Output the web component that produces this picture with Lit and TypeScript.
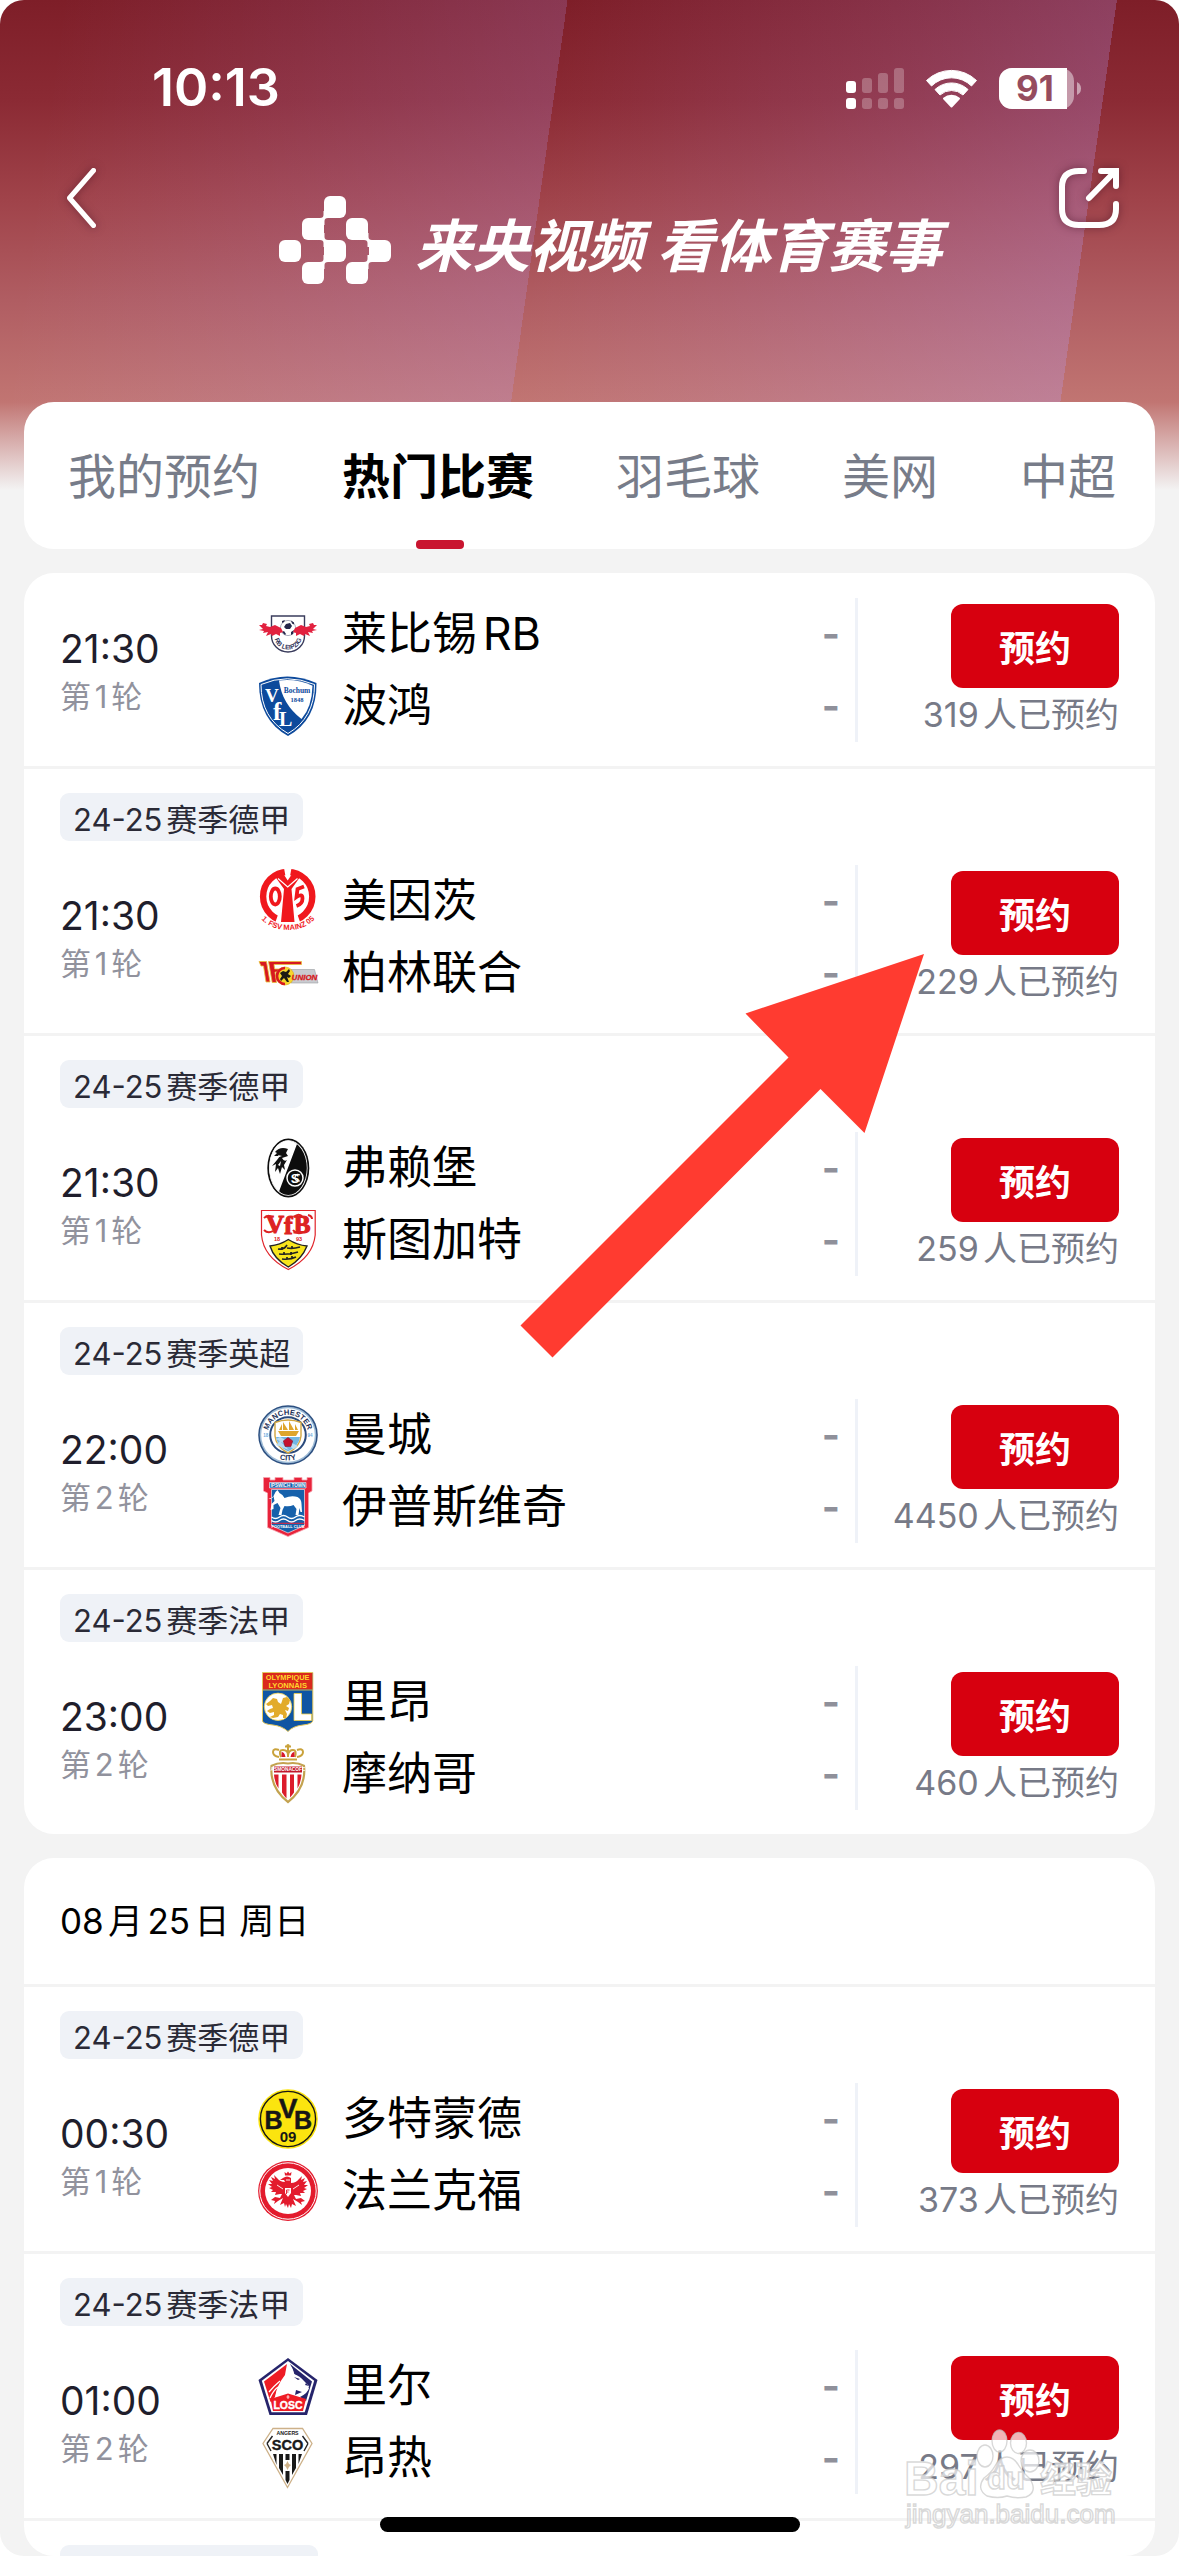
import { LitElement, html, svg, css, nothing, TemplateResult } from "lit";
import { customElement, property, state } from "lit/decorators.js";
import { classMap } from "lit/directives/class-map.js";

interface Team {
  name: string;
  crest: string;
}

interface Match {
  league?: string;
  time: string;
  round: string;
  home: Team;
  away: Team;
  booked: number;
}

const SANS = "Liberation Sans, Arial, sans-serif";
const SERIF = "Liberation Serif, serif";

const CRESTS: Record<string, TemplateResult> = {
  leipzig: html`<svg viewBox="0 0 60 60" aria-hidden="true">
    <path d="M13.500 12H46.500V32A16.500 16 0 0 1 13.500 32Z" fill="#fff" stroke="#3a3c5c" stroke-width="1.400" />
    <circle cx="30" cy="24" r="7.600" fill="#fff" stroke="#8a8ca4" stroke-width=".7" />
    <path d="M28 20l4-1 2 3-2 3-4 0-2-2zM24 17l3-1-1 2-2 1zM33 16.600l3 2 0 2-2-1zM24 28l2-1 2 3-1 1zM33 28l3-2-1 4-2 1z" fill="#24264a" />
    <path d="M1 21l3 0 1-2 4 1-1 2 4 1 5-2 6 3 2 4-3 1 0 3-4-2-4 2-1-2-5 2 2-4-5 1 1-2-5-1 4-1z" fill="#e2213f" />
    <path d="M59 21l-3 0-1-2-4 1 1 2-4 1-5-2-6 3-2 4 3 1 0 3 4-2 4 2 1-2 5 2-2-4 5 1-1-2 5-1-4-1z" fill="#e2213f" />
    <path id="lp-arc" d="M16.500 33A13.500 12.500 0 0 0 43.500 33" fill="none" />
    <text font-family=${SANS} font-size="6.500" font-weight="700" fill="#34365a">
      <textPath href="#lp-arc" startOffset="50%" text-anchor="middle">RB LEIPZIG</textPath>
    </text>
  </svg>`,
  bochum: html`<svg viewBox="0 0 60 60" aria-hidden="true">
    <path d="M1 7Q29 -6 58.500 7Q59 44 30 60Q1 44 1 7Z" fill="#0d4a9c" />
    <path d="M3 8.500Q29 -3 56.500 8.500Q56.500 42 30 57.500Q3 42 3 8.500Z" fill="none" stroke="#fff" stroke-width="1" />
    <path d="M21 4.500Q40 2.500 54.500 9.800Q54 31 43.500 43Q24 28 21 4.500Z" fill="#fff" />
    <g font-family=${SERIF} font-weight="700">
      <text x="7" y="26" font-size="19" fill="#fff">V</text>
      <text x="15" y="44" font-size="25" fill="#fff">f</text>
      <text x="21" y="50" font-size="20" fill="#fff">L</text>
      <text x="39" y="17" font-size="7.500" text-anchor="middle" fill="#0d4a9c">Bochum</text>
      <text x="39" y="25.500" font-size="6.500" text-anchor="middle" fill="#0d4a9c">1848</text>
    </g>
  </svg>`,
  mainz: html`<svg viewBox="0 0 60 60" aria-hidden="true">
    <circle cx="29.700" cy="25.500" r="24.600" fill="none" stroke="#f0181d" stroke-width="6.400" />
    <path d="M26 -3H33.500L31.500 8H28ZM15 58L22 38H37.500L44.500 58Z" fill="#fff" />
    <path d="M16 4L24.500 1.500L29.700 9.500L35 1.500L43.500 4L33.500 18L36.500 51H23L26 18Z" fill="#f0181d" />
    <path d="M20 7.500L29.700 16L39.500 7.500" fill="none" stroke="#fff" stroke-width="1.200" />
    <ellipse cx="17.300" cy="25.500" rx="4.500" ry="8" fill="none" stroke="#f0181d" stroke-width="3.800" />
    <path d="M46 15.500L39.500 18L38.500 26Q44.500 22 44.500 27.500Q44.500 33 38.500 35" fill="none" stroke="#f0181d" stroke-width="3.800" />
    <path id="mz-arc" d="M-1 43Q10 59 30 59Q50 59 61 43" fill="none" />
    <text font-family=${SANS} font-size="7.500" font-weight="700" fill="#f0181d">
      <textPath href="#mz-arc" startOffset="50%" text-anchor="middle">1. FSV MAINZ 05</textPath>
    </text>
  </svg>`,
  union: html`<svg viewBox="0 0 60 60" aria-hidden="true">
    <path d="M33 26.500H56.500L60 40H33Z" fill="#c9cbd0" stroke="#9b9da3" stroke-width=".6" />
    <path d="M1 18.500L8.500 18.500L12 39H8L5.500 23H3Z" fill="#d71920" stroke="#e9c23a" stroke-width=".8" />
    <path d="M10.500 18.500H43.500V21.500H16L16.600 26H22V29H17L18.500 39.500H14.200Z" fill="#d71920" stroke="#e9c23a" stroke-width=".8" />
    <circle cx="27" cy="33" r="9" fill="#f6d62b" stroke="#d9a91a" stroke-width=".6" />
    <path d="M27 25A8 8 0 1 0 27 41" fill="none" stroke="#d71920" stroke-width="2.600" />
    <path d="M22 30l3-2 3 1 3-3 1 2-2 3 3 2-2 2-2-1 2 5-2 0-3-4-3 3-1-2 2-3z" fill="#1b1b14" />
    <text x="46.500" y="37" text-anchor="middle" font-family=${SANS} font-size="8" font-style="italic" font-weight="700" fill="#d71920" stroke="#d71920" stroke-width=".3">UNION</text>
  </svg>`,
  freiburg: html`<svg viewBox="0 0 60 60" aria-hidden="true">
    <ellipse cx="30.300" cy="30" rx="21" ry="29.500" fill="#0d0d0d" />
    <ellipse cx="30.300" cy="30" rx="19.300" ry="27.800" fill="#fff" />
    <ellipse cx="30.300" cy="30" rx="18.500" ry="27" fill="#0d0d0d" />
    <path d="M39 6A18.500 27 0 0 0 21 53.500Z" fill="#fff" />
    <path d="M17 14q5-6 13-3l-2 4 2 3-6 2q2 4 5 2l-3 5 1 5-3-3-2 7-2-6-3 4 1-8-4 2 5-6 3-4-6 0 3-3z" fill="#111" />
    <path d="M20 17l4 1-3 1zM20 27l3-4-1 5z" fill="#fff" />
    <circle cx="37" cy="40" r="8" fill="none" stroke="#fff" stroke-width="1.500" />
    <text x="37" y="45" text-anchor="middle" font-family=${SANS} font-size="13" font-weight="700" fill="#fff">S</text>
    <path d="M42 37q-4-2-5 2t5 4" fill="none" stroke="#fff" stroke-width="1.200" />
  </svg>`,
  stuttgart: html`<svg viewBox="0 0 60 60" aria-hidden="true">
    <path d="M3.500 .5H57.200V25Q55 47 30.300 59.500Q5.500 47 3.500 25Z" fill="#fff" stroke="#e0242a" stroke-width="1.200" />
    <path d="M12 36Q22 35 30.300 29.500Q39 35 49 36Q44 49 30.300 57Q16 49 12 36Z" fill="#f8e51c" stroke="#222" stroke-width="1.400" />
    <g font-family=${SERIF} font-size="25" font-weight="700" fill="#dd2222" stroke="#dd2222" stroke-width="1.200" text-anchor="middle">
      <text x="17" y="23">V</text>
      <text x="30.500" y="24">f</text>
      <text x="44" y="23">B</text>
    </g>
    <path d="M6 8q4-4 8-1M6 20q4 4 9 1M36 7q4-4 8-1M35 20q4 5 10 2M50 5q4 1 4 4" fill="none" stroke="#dd2222" stroke-width="2" />
    <g font-family=${SANS} font-size="5.500" font-weight="700" fill="#dd2222">
      <text x="16" y="31">18</text>
      <text x="38" y="31">93</text>
    </g>
    <path d="M20 39q6 1 9-4M29 38q6 1 13-1M21 44q10 1 19-2M24 49q8 1 14-2M24 37v3M34 36v3M26 42v3M33 42v3M29 47v3M34 46v3" fill="none" stroke="#222" stroke-width="1.700" />
  </svg>`,
  mancity: html`<svg viewBox="0 0 60 60" aria-hidden="true">
    <circle cx="30" cy="30" r="29.800" fill="#2c4f80" />
    <circle cx="30" cy="30" r="28.300" fill="#9dbbd6" />
    <circle cx="30" cy="30" r="26.800" fill="#fff" />
    <circle cx="30" cy="30" r="17.800" fill="#fff" stroke="#2a4a7c" stroke-width="2" />
    <path d="M17 17.500Q30 12.500 43 17.500V31Q42 42 30 48Q18 42 17 31Z" fill="#fff" stroke="#d2a641" stroke-width="1.400" />
    <path d="M18 32H42Q41 41 30 46.500Q19 41 18 32Z" fill="#72b6e4" />
    <path d="M18 34l4-2 18 9-4 3zM18 40l4-4 9 9z" fill="#b9dcf3" />
    <path d="M20 26h21l-3 5h-15zM21 25l3-6v6zM25 25v-8l5 8zM31 25v-9l5 9zM37 25v-6l3 6z" fill="#dea52d" />
    <path d="M30 32.500l4.700 3.400-1.800 5.600h-5.800l-1.800-5.600z" fill="#c4122f" stroke="#7b1733" stroke-width=".6" />
    <path id="mc-top" d="M9.800 30A20.200 20.200 0 0 1 50.200 30" fill="none" />
    <path id="mc-bot" d="M4.500 30A25.500 25.500 0 0 0 55.500 30" fill="none" />
    <g font-family=${SANS} font-weight="700" fill="#1d3158">
      <text font-size="7.600"><textPath href="#mc-top" startOffset="50%" text-anchor="middle">MANCHESTER</textPath></text>
      <text font-size="7.600"><textPath href="#mc-bot" startOffset="50%" text-anchor="middle">CITY</textPath></text>
      <text x="5.200" y="32" font-size="4.500" fill="#6cabdd">18</text>
      <text x="49.500" y="32" font-size="4.500" fill="#6cabdd">94</text>
    </g>
  </svg>`,
  ipswich: html`<svg viewBox="0 0 60 60" aria-hidden="true">
    <path d="M5.500 .5H12V3H17V.5H25V3H36V.5H44V3H49V.5H54V14L50.500 16V50.500L30 59.500L9.500 50.500V16L5.500 14Z" fill="#e8233b" stroke="#f6a3ad" stroke-width=".8" />
    <path d="M11.500 5.500H48V11H11.500ZM13.500 12.500H46.500V48.500L30 56L13.500 48.500Z" fill="#1661ab" stroke="#fff" stroke-width=".6" />
    <path d="M14.500 21l3-6 2-2 2 3q4 2 5 5 7-3 13-1 4 2 4 7l.5 8h-1.500l-1-4-1 7h-3l1-6-3-4q-4 2-9 1l-2 4-1 5h-3l2-7-3-5-4 2 0 4-3 1 1-6 3-3-1-5-3 3-2-1z" fill="#fff" />
    <path d="M13.500 40q4 3 8 0t8 0 8 0 9 0M13.500 43.500q4 3 8 0t8 0 8 0 9 0" fill="none" stroke="#fff" stroke-width="1.400" />
    <path d="M13.500 46.300H46.500" stroke="#e8233b" stroke-width="1" />
    <g font-family=${SANS} font-weight="700" fill="#fff" text-anchor="middle">
      <text x="30" y="10" font-size="4.600">IPSWICH TOWN</text>
      <text x="30" y="50.600" font-size="3.900">FOOTBALL CLUB</text>
    </g>
  </svg>`,
  lyon: html`<svg viewBox="0 0 60 60" aria-hidden="true">
    <path d="M4.500 .5H54.800V49Q54 52 45 53Q35 54 30 59.500Q24 54 15 53Q5 52 4.500 49Z" fill="#0f55a3" stroke="#e4c75c" stroke-width="1" />
    <path d="M5 1H54.300V17.500H5Z" fill="#da291c" />
    <path d="M5 18H54.300" stroke="#f0cf47" stroke-width=".8" />
    <g font-family=${SANS} font-weight="700" fill="#ffd52d" text-anchor="middle">
      <text x="29.700" y="8.300" font-size="7.400">OLYMPIQUE</text>
      <text x="29.700" y="15.800" font-size="7.600">LYONNAIS</text>
    </g>
    <circle cx="20" cy="34.800" r="13.700" fill="#fff" stroke="#f0cf47" stroke-width=".8" />
    <path d="M36 21.500H43.500V42H53.500V48.500H36Z" fill="#fff" stroke="#f0cf47" stroke-width=".8" />
    <path d="M12 29l3-3 4 1 1 3 3 2 2-6 4-1 3 3-1 4-3 2 3 2-1 3-3-1 2 4-1 4-3 0 0-3-3-1-2 3-5 1-3-1 4-2 0-3-4 1-3-2 3-2 3-1-1-3-4 1-2-2z" fill="#e2ab2b" />
  </svg>`,
  monaco: html`<svg viewBox="0 0 60 60" aria-hidden="true">
    <path d="M21 13q-6-1-6-5t6-2M39 13q6-1 6-5t-6-2M30 13V3M23 13q-3-7 2-7t5 5q1-5 5-5t2 7M27 2.500h6" fill="none" stroke="#c9a23b" stroke-width="2" />
    <path d="M23.500 8q3 0 4 5h-4zM36.500 8q-3 0-4 5h4z" fill="#d7182a" />
    <path d="M21 14.500H39V16.500H21Z" fill="#c9a23b" />
    <circle cx="30" cy="1.800" r="1.700" fill="#c9a23b" />
    <path d="M12.500 21Q21 17 30 18.500Q39 17 47 21Q50 44 30 59.500Q10 44 12.500 21Z" fill="#c3a24f" />
    <path d="M14.500 22.500Q22 19 30 20.500Q38 19 45 22.500Q47 43 30 56.500Q13 43 14.500 22.500Z" fill="#fff" />
    <path d="M16 30.500h4.500v14q-4-6-4.500-14zM24 30.500h4.500v24q-2-2-4.500-6zM32 30.500h4v18q-2 3-4 5zM39.500 30.500h4q-.5 8-4 14z" fill="#dc1b2b" />
    <path d="M16 22.500H44V28.500H16Z" fill="#c2182b" />
    <text x="30" y="27.400" text-anchor="middle" font-family=${SANS} font-size="4.800" font-weight="700" fill="#fff">ASMONACOFC</text>
  </svg>`,
  dortmund: html`<svg viewBox="0 0 60 60" aria-hidden="true">
    <circle cx="30" cy="30" r="29.800" fill="#fbe40f" />
    <circle cx="30" cy="30" r="27.600" fill="none" stroke="#161616" stroke-width="1.400" />
    <g font-family=${SANS} font-weight="700" fill="#161616" stroke="#161616" text-anchor="middle">
      <text x="15.500" y="40" font-size="25" stroke-width=".5">B</text>
      <text x="45" y="40" font-size="25" stroke-width=".5">B</text>
      <text x="30" y="29" font-size="28" stroke-width=".5">V</text>
      <text x="30" y="52.500" font-size="15" stroke="none">09</text>
    </g>
  </svg>`,
  frankfurt: html`<svg viewBox="0 0 60 60" aria-hidden="true">
    <circle cx="30" cy="30" r="29.900" fill="#e31b2d" />
    <circle cx="30" cy="30" r="28.200" fill="none" stroke="#fff" stroke-width="1" />
    <circle cx="30" cy="30" r="23" fill="#fff" />
    <path d="M26.500 11l2 1.500 1.500-2 1.500 2 2-1.500-.5 3.500h-6z" fill="#e31b2d" />
    <path d="M25 17q4-3 8 0v5q5 0 8-4l3-3-1 4 4-2-2 4 4-1-3 4 4 0-4 3 3 1-4 2 2 2-5 0 1 3-5-1-2 0 2 4 5-1 4 3-4 1 1 3-4-3-5-3 3 7-4-2-1 4-2-4-1 4-2-4-1 3-1-4-4 2 3-7-5 3-4 3 1-3-4-1 4-3 5 1 2-4-2 0-5 1 1-3-5 0 2-2-4-2 3-1-4-3 4 0-3-4 4 1-2-4 4 2-1-4 3 3q3 4 8 4l-1-2-4 0z" fill="#e31b2d" />
    <path d="M27 27h6v5l-3 4-3-4z" fill="#fff" />
    <path d="M28.500 29h3M28.500 31h2M28.500 29v4" stroke="#e31b2d" stroke-width=".9" fill="none" />
    <path d="M19 24l6 4M41 24l-6 4M28 19h4" stroke="#fff" stroke-width=".9" />
  </svg>`,
  lille: html`<svg viewBox="0 0 60 60" aria-hidden="true">
    <path d="M30 2L59.500 24L49 59H11.500L.5 24Z" fill="#26246b" />
    <path d="M30 5L56.200 24.800L46.700 56.200H13.500L3.800 24.800Z" fill="#fff" />
    <path d="M29 8L6 25.500L12.500 46L17 41Q19 29 27 19Q28 13 29 8Z" fill="#ee1c25" />
    <path d="M32 8L54 25.500L48 45L42 41Q50 37 51 32L40 26L35 15Z" fill="#26246b" />
    <path d="M29 19Q31 13 31 8Q35 11 36 18Q42 20 46 25L51 30Q50 36 44 36Q38 38 34 36Q31 42 27 42L17 42Q19 28 29 19Z" fill="#fff" />
    <path d="M36 21l6 2-2 1zM48 27l3 3-4-1zM38 34l6 2-7 3z" fill="#26246b" />
    <path d="M11 36Q16 30 22 25M12 42q3-7 8-11" stroke="#fff" stroke-width="1.300" fill="none" />
    <path d="M12.500 43L30 37.500L48 43L45 55H15Z" fill="#ee1c25" />
    <text x="30" y="53" text-anchor="middle" font-family=${SANS} font-size="10.500" font-weight="700" fill="#fff" stroke="#fff" stroke-width=".4">LOSC</text>
    <path d="M30 39v4M28.500 41h3" stroke="#fff" stroke-width=".8" />
  </svg>`,
  angers: html`<svg viewBox="0 0 60 60" aria-hidden="true">
    <path d="M15 .5H44.500L54 15.500L29.500 59.500L5 15.500Z" fill="#fff" stroke="#cdb189" stroke-width="1.300" />
    <path d="M9 15.500L14.500 8M50 15.500L44.500 8M9 15.500L13 23M50 15.500L46 23" stroke="#222" stroke-width="1.400" fill="none" />
    <g font-family=${SANS} font-weight="700" fill="#191919" text-anchor="middle">
      <text x="29.500" y="6.600" font-size="5.200">ANGERS</text>
      <text x="29.500" y="22.300" font-size="14.500" stroke="#191919" stroke-width=".4">SCO</text>
    </g>
    <path d="M15 26h3.500v11zM21 26h4v21l-4-7zM27.500 26h4v6h-4zM34 26h4v14l-4 7zM40.500 26h3.500l-3.500 10zM27.500 43h4v9l-2 4-2-4z" fill="#191919" />
    <path d="M29.500 33l1.500 3 2 1-2 2-1.500 3-1.500-3-2-2 2-1z" fill="#cdb189" />
  </svg>`,
};

@customElement("match-row")
class MatchRow extends LitElement {
  @property({ attribute: false }) match!: Match;

  static styles = css`
    :host {
      display: block;
      flex: none;
      padding: 24px 36px;
    }
    .tag {
      display: inline-flex;
      align-items: center;
      height: 48px;
      padding: 0 13px;
      margin-bottom: 24px;
      border-radius: 9px;
      background: #eff2f7;
      color: #2a2a36;
      font-size: 31px;
    }
    .body {
      display: grid;
      grid-template-columns: 198px minmax(0, 1fr) 261px;
      height: 144px;
    }
    .when {
      display: flex;
      flex-direction: column;
      justify-content: center;
    }
    .time {
      font-size: 39px;
      line-height: 54px;
      color: #1f1e2c;
    }
    .round {
      font-size: 31px;
      line-height: 42px;
      color: #91929d;
    }
    .teams {
      display: grid;
      gap: 12px;
      padding: 6px 15px 6px 0;
      border-right: 3px solid #eff2f8;
    }
    .team {
      display: flex;
      align-items: center;
      gap: 24px;
      height: 60px;
      font-size: 45px;
      line-height: 60px;
      color: #000;
    }
    .team svg {
      flex: none;
      width: 60px;
      height: 60px;
      overflow: visible;
    }
    .score {
      margin-left: auto;
      font-size: 39px;
      font-weight: 700;
      color: #8f909a;
    }
    .book {
      display: flex;
      flex-direction: column;
      align-items: flex-end;
      padding-top: 6px;
    }
    button {
      width: 168px;
      height: 84px;
      flex: none;
      padding: 0;
      border: 0;
      border-radius: 12px;
      background: #d7000f;
      color: #fff;
      font: inherit;
      font-size: 36px;
      font-weight: 600;
    }
    .count {
      font-size: 34px;
      line-height: 54px;
      color: #777a87;
      white-space: nowrap;
    }
  `;

  private team(team: Team) {
    return html`<div class="team">
      ${CRESTS[team.crest]}
      <span>${team.name}</span>
      <span class="score">-</span>
    </div>`;
  }

  render() {
    const m = this.match;
    return html`
      ${m.league ? html`<div class="tag">${m.league}</div>` : nothing}
      <div class="body">
        <div class="when">
          <span class="time">${m.time}</span>
          <span class="round">${m.round}</span>
        </div>
        <div class="teams">${this.team(m.home)}${this.team(m.away)}</div>
        <div class="book">
          <button type="button">预约</button>
          <span class="count">${m.booked}人已预约</span>
        </div>
      </div>
    `;
  }
}

const TODAY: Match[] = [
  { time: "21:30", round: "第1轮", home: { name: "莱比锡RB", crest: "leipzig" }, away: { name: "波鸿", crest: "bochum" }, booked: 319 },
  { league: "24-25赛季德甲", time: "21:30", round: "第1轮", home: { name: "美因茨", crest: "mainz" }, away: { name: "柏林联合", crest: "union" }, booked: 229 },
  { league: "24-25赛季德甲", time: "21:30", round: "第1轮", home: { name: "弗赖堡", crest: "freiburg" }, away: { name: "斯图加特", crest: "stuttgart" }, booked: 259 },
  { league: "24-25赛季英超", time: "22:00", round: "第2轮", home: { name: "曼城", crest: "mancity" }, away: { name: "伊普斯维奇", crest: "ipswich" }, booked: 4450 },
  { league: "24-25赛季法甲", time: "23:00", round: "第2轮", home: { name: "里昂", crest: "lyon" }, away: { name: "摩纳哥", crest: "monaco" }, booked: 460 },
];

const SUNDAY: Match[] = [
  { league: "24-25赛季德甲", time: "00:30", round: "第1轮", home: { name: "多特蒙德", crest: "dortmund" }, away: { name: "法兰克福", crest: "frankfurt" }, booked: 373 },
  { league: "24-25赛季法甲", time: "01:00", round: "第2轮", home: { name: "里尔", crest: "lille" }, away: { name: "昂热", crest: "angers" }, booked: 297 },
];

const TABS = ["我的预约", "热门比赛", "羽毛球", "美网", "中超"];

/* Top-left corners of the logo's rounded cells. */
const CELLS = [[45, 0], [23, 22], [67, 22], [0, 44], [45, 44], [90, 44], [23, 66], [67, 66]];

/* Points where two diagonal cells flow into each other; -1 mirrors the joint. */
const JOINTS = [[45, 22, -1], [45, 44, 1], [89, 44, 1], [45, 66, -1], [89, 66, -1]];

@customElement("app-root")
class AppRoot extends LitElement {
  @state() private tab = "热门比赛";

  static styles = css`
    :host {
      display: block;
      background: #fff;
      font-family: Inter, "Noto Sans CJK SC", sans-serif;
      text-autospace: normal;
    }
    .screen {
      position: relative;
      display: flex;
      flex-direction: column;
      gap: 24px;
      box-sizing: border-box;
      height: 100vh;
      padding: 0 24px;
      overflow: hidden;
      border-radius: 24px;
      background: #f3f3f3;
    }
    .backdrop {
      position: absolute;
      inset: 0 0 auto;
      height: 490px;
      background:
        linear-gradient(180deg, rgba(243, 243, 243, 0) 402px, #f3f3f3 490px),
        linear-gradient(
          98deg,
          rgba(185, 160, 255, 0) 60px,
          rgba(185, 160, 255, 0.2) 562px,
          rgba(185, 160, 255, 0) 562px,
          rgba(185, 160, 255, 0.26) 1106px,
          rgba(185, 160, 255, 0) 1106px
        ),
        linear-gradient(180deg, #7e1e28 0, #8b2a34 100px, #a0434a 200px, #b05d62 300px, #c17572 402px);
    }
    .header {
      position: relative;
      flex: none;
      height: 378px;
      margin: 0 -24px;
      color: #fff;
    }
    .status {
      display: flex;
      align-items: center;
      justify-content: space-between;
      height: 60px;
      padding: 58px 96px 50px 152px;
    }
    .clock {
      font-size: 52px;
      font-weight: 600;
      line-height: 60px;
    }
    .nav {
      display: grid;
      grid-template-columns: 60px 1fr 60px;
      height: 116px;
      padding: 0 60px;
    }
    .nav button {
      width: 60px;
      height: 60px;
      padding: 0;
      border: 0;
      background: none;
      color: inherit;
    }
    .nav button svg {
      display: block;
      overflow: visible;
      filter: drop-shadow(0 0 4px rgba(60, 10, 30, 0.5));
    }
    .brand {
      display: flex;
      align-items: flex-end;
      justify-content: center;
      gap: 24px;
      padding-left: 42px;
    }
    .slogan {
      margin: 0;
      font-size: 57px;
      font-weight: 700;
      font-style: italic;
      line-height: 74px;
      white-space: nowrap;
    }
    .card {
      position: relative;
      flex: none;
      display: flex;
      flex-direction: column;
      gap: 3px;
      overflow: hidden;
      border-radius: 30px;
      background: #f3f3f3;
    }
    .card > * {
      background: #fff;
    }
    .today > :first-child {
      padding-top: 25px;
    }
    .tabs {
      flex-direction: row;
      gap: 82px;
      height: 147px;
      padding: 0 44px;
      background: #fff;
    }
    .tabs button {
      position: relative;
      flex: none;
      padding: 0 0 6px;
      border: 0;
      background: none;
      font: inherit;
      font-size: 48px;
      color: #777c89;
    }
    .tabs .active {
      font-weight: 700;
      color: #000;
    }
    .tabs .active::after {
      content: "";
      position: absolute;
      bottom: 0;
      left: calc(50% - 22px);
      width: 48px;
      height: 9px;
      border-radius: 4px;
      background: #c9152f;
    }
    .last {
      flex: 1 1 0;
      min-height: 0;
    }
    .date {
      flex: none;
      margin: 0;
      padding: 0 36px;
      font-size: 35px;
      font-weight: 400;
      line-height: 126px;
      color: #000;
    }
    .next {
      flex: 1;
      padding: 24px 36px;
    }
    .next-tag {
      width: 258px;
      height: 48px;
      border-radius: 9px;
      background: #eff2f7;
    }
    .arrow {
      position: absolute;
      top: 954px;
      right: 254px;
    }
    .watermark {
      position: absolute;
      right: 55px;
      bottom: 16px;
    }
    .home {
      position: absolute;
      bottom: 24px;
      left: calc(50% - 210px);
      width: 420px;
      height: 15px;
      border-radius: 8px;
      background: #000;
    }
  `;

  private statusIcons() {
    return html`<svg width="240" height="44" viewBox="0 0 240 44" role="img" aria-label="信号、无线网络、电量91">
      <g fill="#fff">
        <rect x="3" y="15" width="10" height="12" rx="3" />
        <rect x="3" y="32" width="10" height="11" rx="3" />
        <g opacity=".25">
          <rect x="19" y="12" width="10" height="15" rx="3" />
          <rect x="35" y="7" width="10" height="20" rx="3" />
          <rect x="51" y="2" width="10" height="25" rx="3" />
          <rect x="19" y="32" width="10" height="11" rx="3" />
          <rect x="35" y="32" width="10" height="11" rx="3" />
          <rect x="51" y="32" width="10" height="11" rx="3" />
        </g>
        <path d="M83.500 14.500A36 36 0 0 1 133.500 14.500L128.500 20A28.500 28.500 0 0 0 88.500 20Z" stroke="#fff" stroke-linejoin="round" />
        <path d="M92 23.500A24 24 0 0 1 125 23.500L120 29A17 17 0 0 0 97 29Z" stroke="#fff" stroke-linejoin="round" />
        <path d="M101 32.500A12 12 0 0 1 116 32.500L108.500 40.500Z" stroke="#fff" stroke-width="2" stroke-linejoin="round" />
        <rect x="156" y="2" width="75" height="41" rx="13" opacity=".45" />
        <path d="M169 2H224V43H169A13 13 0 0 1 156 30V15A13 13 0 0 1 169 2Z" />
        <path d="M234 16Q238 18 238 22.500T234 29Z" opacity=".5" />
      </g>
      <text x="192" y="35" text-anchor="middle" font-family="Inter, sans-serif" font-size="35" font-weight="700" fill="#954c5e">91</text>
    </svg>`;
  }

  private logo() {
    return html`<svg width="112" height="88" viewBox="0 0 112 88" aria-hidden="true">
      <g fill="#fff">
        ${CELLS.map(([x, y]) => svg`<rect x=${x} y=${y} width="22" height="22" rx="6" />`)}
        ${JOINTS.map(
          ([x, y, dir]) =>
            svg`<path transform="translate(${x} ${y}) scale(${dir} 1)" d="M-7 -7H0.500V-3Q0.500 0 4 0H7V7H-0.500V3Q-0.500 0 -4 0H-7Z" />`
        )}
      </g>
    </svg>`;
  }

  render() {
    return html`
      <div class="screen">
        <div class="backdrop"></div>
        <header class="header">
          <div class="status">
            <span class="clock">10:13</span>
            ${this.statusIcons()}
          </div>
          <div class="nav">
            <button type="button" aria-label="返回">
              <svg width="60" height="60" viewBox="0 0 60 60" aria-hidden="true">
                <path d="M33.500 2.500L9.500 30L33.500 57.500" fill="none" stroke="#fff" stroke-width="5" stroke-linecap="round" stroke-linejoin="round" />
              </svg>
            </button>
            <div class="brand">
              ${this.logo()}
              <h1 class="slogan">来央视频 看体育赛事</h1>
            </div>
            <button type="button" aria-label="分享">
              <svg width="60" height="60" viewBox="0 0 60 60" aria-hidden="true">
                <path d="M25 3H20Q3 3 3 19V41Q3 57 20 57H40Q57 57 57 41V36" fill="none" stroke="#fff" stroke-width="6" stroke-linecap="round" />
                <path d="M30 30L55 4.500M42 3H57V18" fill="none" stroke="#fff" stroke-width="6" stroke-linecap="round" stroke-linejoin="miter" />
              </svg>
            </button>
          </div>
        </header>

        <nav class="card tabs">
          ${TABS.map(
            (t) => html`<button type="button" class=${classMap({ active: t === this.tab })} @click=${() => (this.tab = t)}>${t}</button>`
          )}
        </nav>

        <section class="card today">${TODAY.map((m) => html`<match-row .match=${m}></match-row>`)}</section>

        <section class="card last">
          <h2 class="date">08月25日 周日</h2>
          ${SUNDAY.map((m) => html`<match-row .match=${m}></match-row>`)}
          <div class="next"><div class="next-tag"></div></div>
        </section>

        <svg class="arrow" width="405" height="404" viewBox="520 954 405 404" aria-hidden="true">
          <path d="M924 954L745.500 1013.500L788.500 1057.500L520.500 1325.500L552.500 1357.500L820.500 1089L864.500 1133Z" fill="#ff3b30" />
        </svg>

        <div class="home"></div>

        <svg class="watermark" width="224" height="116" viewBox="900 2424 224 116" role="img" aria-label="百度经验">
          <g fill="#fff" fill-opacity=".7" stroke="#c8c8c8" stroke-opacity=".7" stroke-width="1.400">
            <ellipse cx="985" cy="2456" rx="8" ry="11" />
            <ellipse cx="999.500" cy="2441" rx="7.500" ry="11" />
            <ellipse cx="1018.500" cy="2443" rx="8" ry="10.500" />
            <ellipse cx="1030" cy="2461" rx="9" ry="11" />
            <path d="M1007 2457Q1014 2457 1019 2466Q1023 2473 1030 2479Q1038 2492 1026 2497Q1016 2499 1007 2496Q998 2499 987 2496Q976 2489 984 2478Q991 2473 995 2466Q1000 2457 1007 2457Z" />
            <text x="904" y="2495" font-family="Liberation Sans, sans-serif" font-weight="700" font-size="48">Bai</text>
            <text x="1006" y="2489" text-anchor="middle" font-family="Liberation Sans, sans-serif" font-weight="700" font-size="31">du</text>
            <text x="1040" y="2493" font-family="Noto Sans CJK SC, sans-serif" font-weight="700" font-size="36">经验</text>
            <text x="906" y="2523" font-family="Liberation Sans, sans-serif" font-size="26">jingyan.baidu.com</text>
          </g>
        </svg>
      </div>
    `;
  }
}
